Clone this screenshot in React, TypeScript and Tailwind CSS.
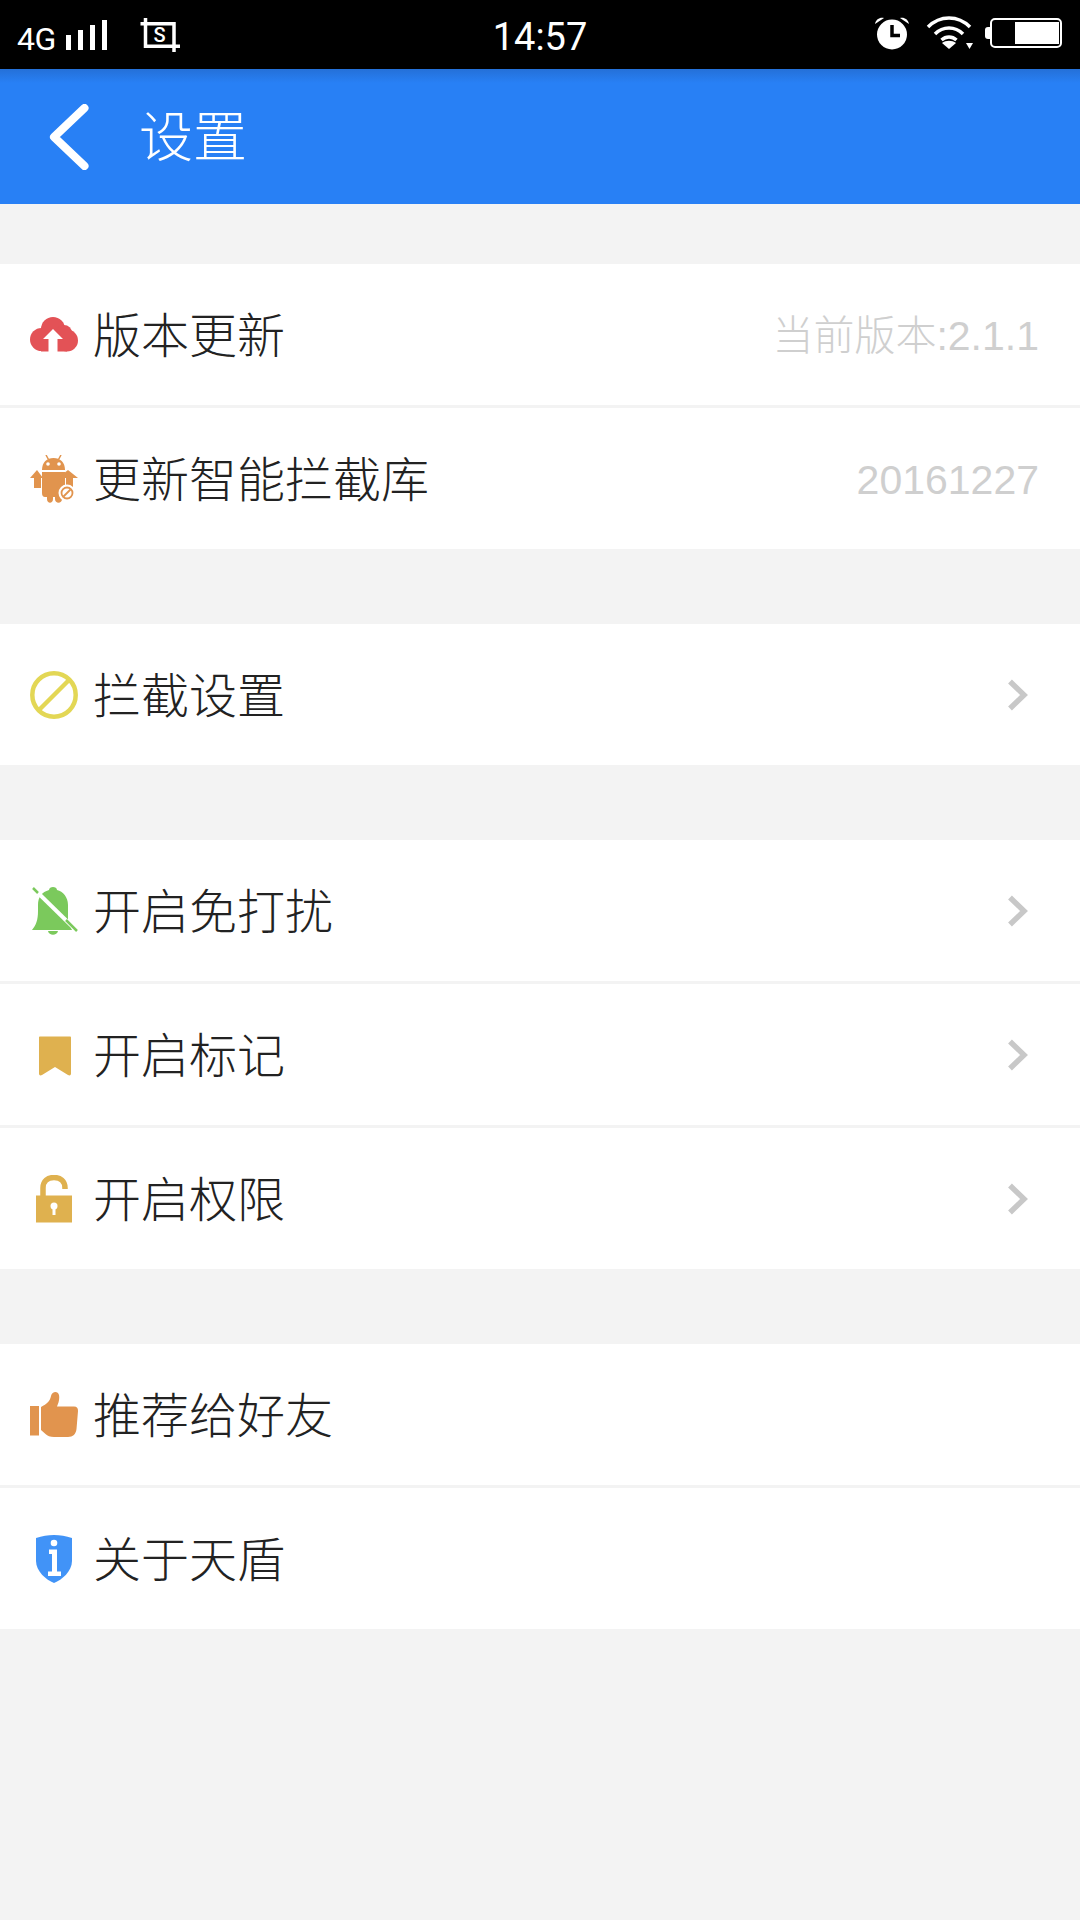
import type { ReactNode } from "react";

const font = "font-['Roboto','Noto_Sans_CJK_SC',sans-serif]";

function Glyph({ children, className }: { children: ReactNode; className?: string }) {
  return (
    <svg viewBox="0 0 48 48" className={`w-12 h-12 shrink-0 ${className ?? ""}`}>
      {children}
    </svg>
  );
}

function CloudIcon() {
  return (
    <Glyph>
      <g fill="#e35256">
        <circle cx="11.500" cy="28.500" r="11.500" />
        <circle cx="37" cy="29.500" r="11" />
        <circle cx="23" cy="18" r="12" />
        <circle cx="34" cy="22" r="8" />
        <rect x="11" y="20" width="26" height="20.500" />
      </g>
      <path fill="#fff" d="M23 18L33 28H27.500V41H18.500V28H13Z" />
    </Glyph>
  );
}

function AndroidIcon() {
  return (
    <Glyph>
      <g fill="#e1944e">
        <path d="M16 0L18.500 4.500M31 0L28.500 4.500" stroke="#e1944e" strokeWidth="1.500" fill="none" />
        <path d="M12 15C12 7 17 3 23.500 3C30 3 35 7 35 15Z" />
        <path d="M12 17H35V38C35 40.500 34 42 32 42V44C32 49 25 49 25 44V42H23V44C23 49 17 49 17 44V42H15C13 42 12 40.500 12 38Z" />
        <path d="M0 23L7 15L13 23H11V33H4V23Z" />
        <path d="M28 23L38 15L48 23H43V33H36V23Z" />
      </g>
      <circle cx="18" cy="9" r="1.800" fill="#fff" />
      <circle cx="29" cy="9" r="1.800" fill="#fff" />
      <circle cx="37" cy="38" r="8.500" fill="#fff" />
      <circle cx="37" cy="38" r="5.500" fill="none" stroke="#e1944e" strokeWidth="1.800" />
      <path d="M33.500 41.500L40.500 34.500" stroke="#e1944e" strokeWidth="1.800" />
    </Glyph>
  );
}

function BanIcon() {
  return (
    <Glyph>
      <circle cx="24" cy="24" r="21.700" fill="none" stroke="#e3d755" strokeWidth="4.500" />
      <path d="M9.500 38.500L38.500 9.500" stroke="#e3d755" strokeWidth="4.500" />
    </Glyph>
  );
}

function BellOffIcon() {
  return (
    <Glyph>
      <path
        fill="#7bc95c"
        d="M19 3C19 -1 27 -1 27 3C33 4.500 38 10 38 18V34L42 43H2C6 38 8 33 8 24V18C8 10 12 5 19 3ZM18 44H28C27 49 19 49 18 44Z"
      />
      <path d="M3 1L47 44" stroke="#fff" strokeWidth="4" />
      <path d="M3 1L8 6M36 33L47 44" stroke="#7bc95c" strokeWidth="2.500" />
    </Glyph>
  );
}

function BookmarkIcon() {
  return (
    <Glyph>
      <path
        fill="#dfb14f"
        d="M10 5.500H40C40.600 5.500 41 6 41 6.500V42.500C41 44.500 39.500 45 38 44L25 36L12 44C10.500 45 9 44.500 9 42.500V6.500C9 6 9.400 5.500 10 5.500Z"
      />
    </Glyph>
  );
}

function LockOpenIcon() {
  return (
    <Glyph>
      <path d="M13 21V13C13 6 18 2.500 24 2.500C30 2.500 35 6 35 13V14" fill="none" stroke="#dfb14f" strokeWidth="5.500" />
      <rect x="6" y="20.500" width="36" height="27" fill="#dfb14f" />
      <circle cx="24" cy="31" r="3.500" fill="#fff" />
      <rect x="22.500" y="31" width="3" height="9" fill="#fff" />
    </Glyph>
  );
}

function ThumbIcon() {
  return (
    <Glyph>
      <path
        fill="#e1944e"
        d="M0 15H9V44.500H0ZM11 16C17 13 20 10 21 5C22 0 28 -0.500 29 4C29.800 8 28.500 12 27 15.500H44C47 15.500 48 17 48 20L46.500 38C46 43 43 46 38 46H24C20 46 17.500 45 15.500 43L11 39Z"
      />
    </Glyph>
  );
}

function ShieldInfoIcon() {
  return (
    <Glyph>
      <path
        fill="#4193f7"
        d="M6 3C12 1 18 0 24 0C30 0 36 1 42 3V26C42 36 32 45 24 48C16 45 6 36 6 26Z"
      />
      <circle cx="24" cy="8" r="3.300" fill="#fff" />
      <path fill="#fff" d="M19 14.500H27V36.500H31V41H18V36.500H22V19H19Z" />
    </Glyph>
  );
}

function Chevron() {
  return (
    <svg viewBox="0 0 24 34" className="w-6 h-[34px] shrink-0 mr-[9px]">
      <path d="M4 3.500L18 17L4 30.500" fill="none" stroke="#c8c8c8" strokeWidth="5.500" />
    </svg>
  );
}

function Row({ icon, label, value, arrow }: { icon: ReactNode; label: string; value?: string; arrow?: boolean }) {
  return (
    <div className="h-[141px] bg-white flex items-center pl-[30px] pr-[41px]">
      {icon}
      <span className="ml-[15px] mt-[4px] text-[48px] leading-none font-light text-[#222222] whitespace-nowrap">{label}</span>
      <div className="flex-1" />
      {value && (
        <span className="mt-[4px] text-[41px] leading-none font-light font-['Liberation_Sans','Noto_Sans_CJK_SC',sans-serif] text-[#cfcfcf] whitespace-nowrap">
          {value}
        </span>
      )}
      {arrow && <Chevron />}
    </div>
  );
}

function Divider() {
  return <div className="h-[3px] bg-[#f3f3f3]" />;
}

function StatusBar() {
  return (
    <div className="h-[69px] bg-black text-white flex items-center relative">
      <div className="flex items-center pl-[17px] pb-[3px]">
        <span className="w-[38px] text-[32px] leading-8 tracking-[-0.5px] mt-[11px] font-['Roboto',sans-serif] whitespace-nowrap">4G</span>
        <svg viewBox="0 0 44 32" className="w-11 h-8 ml-[11px] mt-[2px]" fill="#fff">
          <rect x="0" y="17" width="5" height="15" />
          <rect x="12" y="12" width="5" height="20" />
          <rect x="24" y="7" width="5" height="25" />
          <rect x="36" y="2" width="5" height="30" />
        </svg>
        <svg viewBox="0 0 42 36" className="w-[42px] h-9 ml-[29px] mt-[4px]">
          <path d="M6.500 1V29.250H35V6.750H1.500M35 29V35M33 29.250H41" fill="none" stroke="#fff" strokeWidth="3.500" />
          <text x="20.500" y="24.500" textAnchor="middle" fontSize="20" fill="#fff" fontFamily="Roboto, sans-serif" fontWeight="500">
            S
          </text>
        </svg>
      </div>
      <span className="absolute left-0 right-0 top-[16px] text-center text-[38px] leading-[42px] font-['Roboto',sans-serif]">14:57</span>
      <div className="flex-1" />
      <div className="flex items-center pr-[18px] pb-[3px]">
        <svg viewBox="0 0 36 34" className="w-9 h-[34px]">
          <circle cx="18" cy="18.500" r="15" fill="#fff" />
          <path d="M18 9V19.500H26" fill="none" stroke="#000" strokeWidth="3.500" />
          <path d="M1 8C2 3 6 1 10 2ZM35 8C34 3 30 1 26 2Z" fill="#fff" />
        </svg>
        <svg viewBox="0 0 48 34" className="w-12 h-[34px] ml-[16px]">
          <path d="M2 11C14 -1 32 -1 44 11" fill="none" stroke="#fff" strokeWidth="3.500" />
          <path d="M9 18C17 10 29 10 37 18" fill="none" stroke="#fff" strokeWidth="3.500" />
          <path d="M15.500 24C20 20 26 20 30.500 24" fill="none" stroke="#fff" strokeWidth="3.500" />
          <path d="M16 27L23 33L30 27C26 24 20 24 16 27Z" fill="#fff" />
          <path d="M40 27H47L43.500 33Z" fill="#fff" />
        </svg>
        <div className="ml-[11px] w-[5px] h-3 bg-white rounded-l-[3px]" />
        <div className="w-[72px] h-[30px] border-[2.500px] border-white rounded-[5px] flex justify-end items-center pr-[1.500px]">
          <div className="w-[44px] h-[22px] bg-white" />
        </div>
      </div>
    </div>
  );
}

function Header() {
  return (
    <div className="h-[135px] bg-[linear-gradient(to_bottom,#2470d8_0px,#2880f5_14px)] flex items-center text-white pl-[49px]">
      <svg viewBox="0 0 40 66" className="w-10 h-[66px]">
        <path d="M35.500 4L5 33L35.500 62" fill="none" stroke="#fff" strokeWidth="8" strokeLinecap="round" strokeLinejoin="round" />
      </svg>
      <span className="ml-[50px] mt-[5px] text-[54px] leading-none font-light">设置</span>
    </div>
  );
}

export default function App() {
  return (
    <div className={`w-[1080px] h-[1920px] bg-[#f3f3f3] flex flex-col overflow-hidden ${font}`}>
      <StatusBar />
      <Header />

      <div className="mt-[60px]">
        <Row icon={<CloudIcon />} label="版本更新" value="当前版本:2.1.1" />
        <Divider />
        <Row icon={<AndroidIcon />} label="更新智能拦截库" value="20161227" />
      </div>

      <div className="mt-[75px]">
        <Row icon={<BanIcon />} label="拦截设置" arrow />
      </div>

      <div className="mt-[75px]">
        <Row icon={<BellOffIcon />} label="开启免打扰" arrow />
        <Divider />
        <Row icon={<BookmarkIcon />} label="开启标记" arrow />
        <Divider />
        <Row icon={<LockOpenIcon />} label="开启权限" arrow />
      </div>

      <div className="mt-[75px]">
        <Row icon={<ThumbIcon />} label="推荐给好友" />
        <Divider />
        <Row icon={<ShieldInfoIcon />} label="关于天盾" />
      </div>
    </div>
  );
}
